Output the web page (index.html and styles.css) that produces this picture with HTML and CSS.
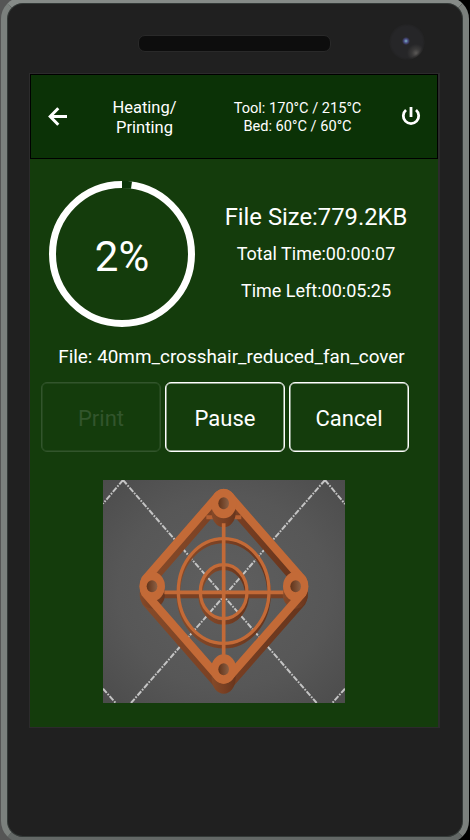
FILE: index.html
```html
<!DOCTYPE html>
<html lang="en">
<head>
<meta charset="utf-8">
<title>Printer</title>
<link rel="stylesheet" href="styles.css">
</head>
<body>
<div class="phone">
  <div class="top-bezel">
    <div class="speaker"></div>
    <div class="camera"></div>
  </div>
  <main class="screen">
    <header class="bar">
      <svg class="icon" viewBox="0 0 20 20"><path d="M19 9.5H3.5M10.3 1.3 2.2 9.5l8.1 8.2" fill="none" stroke="#fff" stroke-width="3"/></svg>
      <div class="state">Heating/<br>Printing</div>
      <div class="temps">Tool: 170°C / 215°C<br>Bed: 60°C / 60°C</div>
      <svg class="icon power" viewBox="0 0 20 20"><path d="M10 1v10M5 4A7.7 7.7 0 1 0 15 4" fill="none" stroke="#fff" stroke-width="2.8"/></svg>
    </header>
    <section class="summary">
      <div class="progress">
        <svg class="ring" viewBox="0 0 146 146"><circle cx="73" cy="73" r="69.5" fill="none" stroke="#fff" stroke-width="7"/><path d="M73 3.5a69.5 69.5 0 0 1 9.5.6" fill="none" stroke="#0b3509" stroke-width="7.4"/></svg>
        <span class="percent">2%</span>
      </div>
      <div class="stats">
        <div class="size">File Size:779.2KB</div>
        <div class="time">Total Time:00:00:07</div>
        <div class="time">Time Left:00:05:25</div>
      </div>
    </section>
    <div class="file">File: 40mm_crosshair_reduced_fan_cover</div>
    <div class="actions">
      <button class="btn" disabled>Print</button>
      <button class="btn">Pause</button>
      <button class="btn">Cancel</button>
    </div>
    <svg class="preview" viewBox="24 30 726 669" preserveAspectRatio="none">
      <defs>
        <radialGradient id="bed" r=".72"><stop offset="0" stop-color="#5f5f5f"/><stop offset=".6" stop-color="#575757"/><stop offset="1" stop-color="#4b4b4b"/></radialGradient>
        <linearGradient id="side"><stop offset="0" stop-color="#854a29"/><stop offset=".5" stop-color="#7a4023"/><stop offset="1" stop-color="#67351d"/></linearGradient>
        <linearGradient id="hole"><stop offset="0" stop-color="#623319"/><stop offset="1" stop-color="#8b6045"/></linearGradient>
      </defs>
      <rect x="24" y="30" width="726" height="669" fill="url(#bed)"/>
      <g fill="none" stroke="#c4c4c4" stroke-width="6" stroke-dasharray="17 4 5 4">
        <path d="M84 30 665 699M690 30 108 699M84 30 24 101M690 30l60 72M24 656l38 43M750 656l-38 43"/>
      </g>
      <g fill="none" stroke="url(#side)">
        <path d="M371 102 151 355M401 102 622 355" stroke-width="24"/>
        <path d="M151 376Q141 376 151 397L371 649Q386 662 401 649L622 397Q632 376 622 376" stroke-width="21" stroke-linejoin="round"/>
        <path d="M155 380 377 633Q386 641 395 633L618 380" stroke-width="28"/>
        <ellipse cx="386" cy="372" rx="136" ry="158" stroke-width="11"/>
        <ellipse cx="386" cy="376" rx="70" ry="82" stroke-width="12"/>
      </g>
      <path d="M334 142h105" stroke="#b45f32" stroke-width="12"/>
      <path d="M208 376h357" stroke="#7a4023" stroke-width="17"/>
      <g fill="url(#side)">
        <ellipse cx="386" cy="128" rx="36" ry="44"/>
        <ellipse cx="172" cy="372" rx="38" ry="44"/>
        <ellipse cx="601" cy="372" rx="38" ry="44"/>
        <ellipse cx="386" cy="625" rx="36" ry="46"/>
      </g>
      <g fill="none" stroke="#c36a37">
        <ellipse cx="386" cy="363" rx="136" ry="157" stroke-width="10"/>
        <ellipse cx="386" cy="365" rx="70" ry="81" stroke-width="10"/>
        <path d="M386 160v400M208 367h357" stroke-width="11"/>
        <path d="M371 75Q386 63 401 75L622 328Q632 350 622 370L401 622Q386 635 371 622L151 370Q141 350 151 328z" stroke-width="25" stroke-linejoin="round"/>
      </g>
      <g fill="#c36a37">
        <ellipse cx="386" cy="101" rx="38" ry="44"/>
        <ellipse cx="172" cy="349" rx="38" ry="44"/>
        <ellipse cx="602" cy="349" rx="38" ry="44"/>
        <ellipse cx="386" cy="597" rx="38" ry="44"/>
      </g>
      <g fill="url(#hole)">
        <ellipse cx="386" cy="100" rx="16" ry="18"/>
        <ellipse cx="171" cy="349" rx="16" ry="18"/>
        <ellipse cx="602" cy="349" rx="16" ry="18"/>
        <ellipse cx="386" cy="598" rx="16" ry="18"/>
      </g>
    </svg>
  </main>
</div>
</body>
</html>
```
FILE: styles.css
```css
* { box-sizing: border-box; }
html, body { height: 100%; }
body {
  margin: 0;
  overflow: hidden;
  background: linear-gradient(90deg, #555 50%, #000 50%);
  font-family: Roboto, sans-serif;
  color: #fff;
}
.phone {
  width: 468px;
  height: 846px;
  margin: -3px 0 0 1px;
  padding: 0 23px 0 22px;
  border: 6px solid #7b807d;
  border-color: #868b88 #7b807d #636866 #7b807d;
  border-radius: 22px;
  background: #202020;
  box-shadow: inset 0 0 0 1px #343a38;
}
.top-bezel {
  height: 70px;
  display: flex;
  padding: 21px 0 0 109px;
  gap: 58px;
}
.speaker {
  width: 193px;
  height: 17px;
  margin-top: 11px;
  border: 1px solid #292929;
  border-radius: 7px;
  background: #0d0d0d;
}
.camera {
  width: 36px;
  height: 36px;
  border-radius: 50%;
  background:
    radial-gradient(circle at 17px 17px, #7fb8c3 0, #4a4c86 2px, transparent 4px),
    radial-gradient(circle at 27px 29px, #5b5957 0, #3b3a3a 4px, transparent 9px),
    #262628;
  -webkit-mask: radial-gradient(circle, #000 60%, rgba(0, 0, 0, .3) 71%);
}
.screen {
  width: 411px;
  height: 655px;
  border: 1px solid #2c2b2c;
  border-right-width: 2px;
  background: #143c0c;
}
.bar {
  height: 85px;
  display: grid;
  grid-template-columns: 54px 119px 187px 1fr;
  align-items: center;
  justify-items: center;
  border: 1px solid #000;
  background: #0b3206;
  text-align: center;
}
.icon { width: 20px; height: 20px; }
.power { margin: -2px 6px 0 0; }
.state { padding-top: 2px; font-size: 16.5px; line-height: 19.5px; }
.temps { padding-top: 2px; font-size: 14.6px; line-height: 17.5px; }
.summary {
  display: grid;
  grid-template-columns: 146px 1fr;
  column-gap: 20px;
  padding: 22px 21px 0 19px;
  height: 182px;
}
.progress { display: grid; place-items: center; width: 146px; height: 146px; }
.ring, .percent { grid-area: 1 / 1; }
.ring { width: 146px; height: 146px; }
.percent { font-size: 42px; line-height: 50px; padding-top: 6px; }
.stats { padding-top: 18px; text-align: center; }
.size { font-size: 23.8px; line-height: 36px; }
.time { font-size: 18px; line-height: 37px; }
.file {
  height: 32px;
  padding-right: 5px;
  font-size: 18.9px;
  line-height: 32px;
  text-align: center;
}
.actions {
  display: grid;
  grid-template-columns: repeat(3, 120px);
  gap: 4px;
  padding: 9px 0 0 11px;
}
.btn {
  height: 70px;
  padding: 3px 0 0;
  border: 1px solid #fff;
  border-radius: 6px;
  background: none;
  color: #fff;
  font: 22px/26px Roboto, sans-serif;
  box-shadow: inset 0 0 0 .5px currentColor;
}
.btn:disabled { color: #32552c; border-color: #32552c; }
.preview {
  display: block;
  width: 242px;
  height: 223px;
  margin: 28px 0 0 73px;
}
```
